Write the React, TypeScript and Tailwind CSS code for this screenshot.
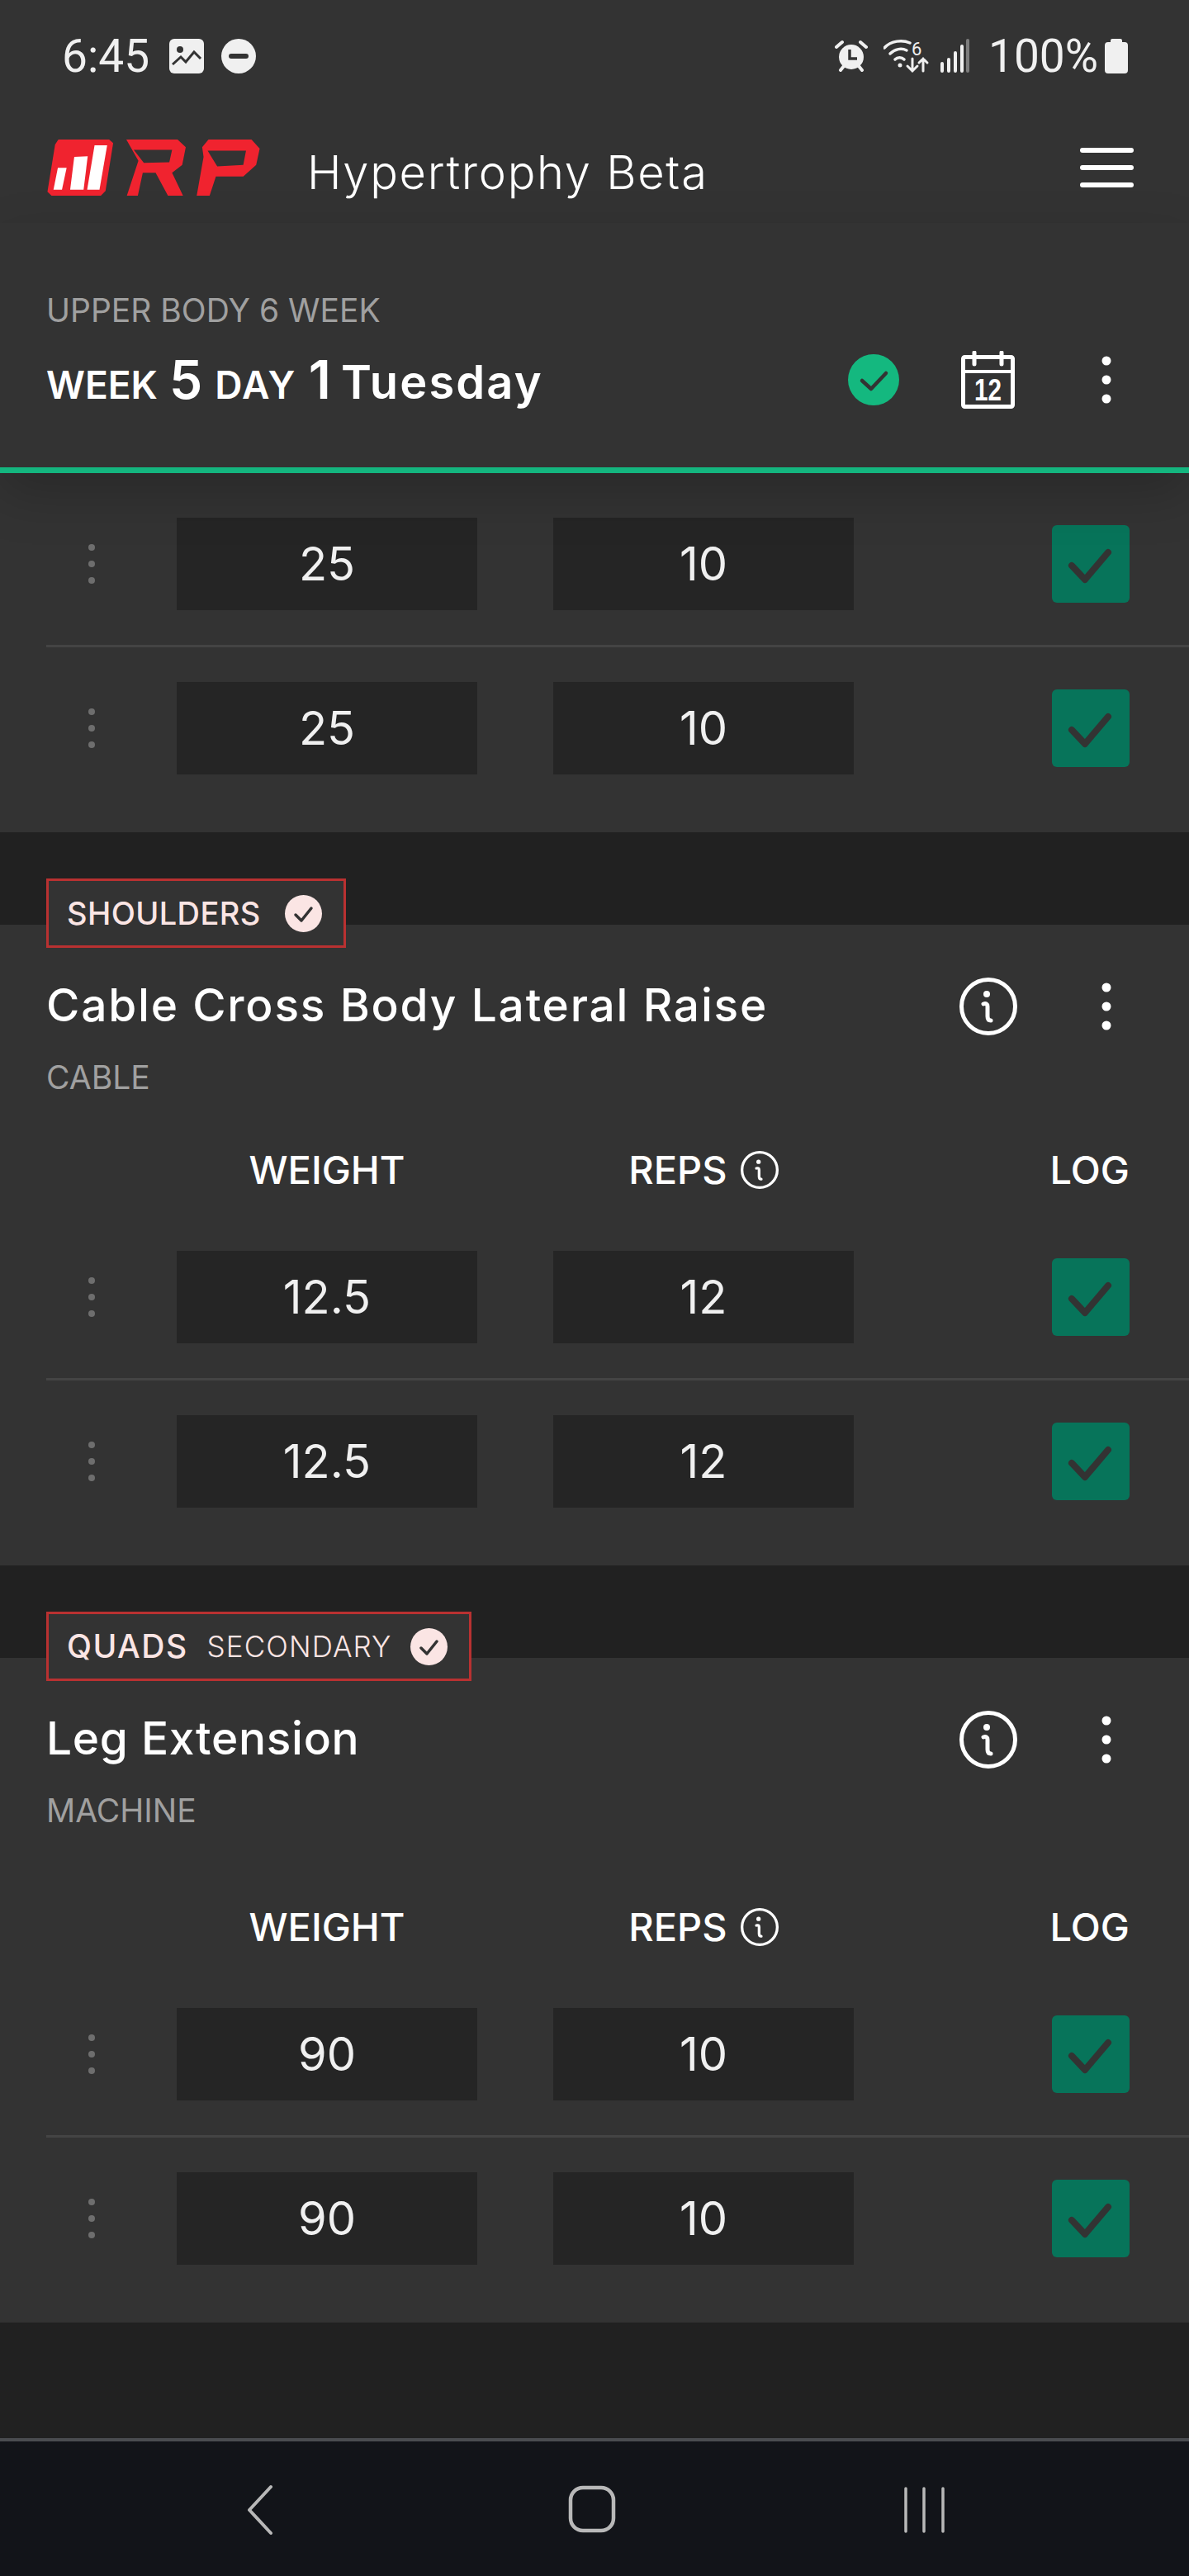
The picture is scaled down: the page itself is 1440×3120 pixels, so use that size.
interface SetRow {
  weight: string;
  reps: string;
}

function Dots({ className }: { className: string }) {
  return (
    <svg viewBox="0 0 12 58" className={className} fill="currentColor">
      <circle cx="6" cy="6" r="5.5" />
      <circle cx="6" cy="29" r="5.5" />
      <circle cx="6" cy="52" r="5.5" />
    </svg>
  );
}

function InfoIcon({ className }: { className: string }) {
  return (
    <svg viewBox="0 0 70 70" className={className} fill="none" stroke="currentColor">
      <circle cx="35" cy="35" r="32.5" strokeWidth="5" />
      <circle cx="33" cy="20" r="4" fill="currentColor" stroke="none" />
      <path d="M29 32c3-1 5 0 5 3v12c0 3 1 5 4 5" strokeWidth="5" strokeLinecap="round" />
    </svg>
  );
}

function Logo() {
  return (
    <svg viewBox="80 57 775 205" className="w-[258px] h-[68px]">
      <polygon fill="#f0232f" points="120,57 305,57 320,70 292,245 275,262 95,262 80,248 108,75" />
      <polygon fill="#fff" points="118,160 150,160 133,240 102,240" />
      <polygon fill="#fff" points="178,120 227,118 212,240 163,240" />
      <polygon fill="#fff" points="252,78 298,78 270,240 225,240" />
      <path
        fill="#f0232f"
        fillRule="evenodd"
        d="M368 57H555L585 85L572 150L535 178L575 262H520L475 178H428L410 262H370L412 135ZM395 95L432 142L525 140L535 95Z"
      />
      <path
        fill="#f0232f"
        fillRule="evenodd"
        d="M668 57H825L855 90L842 150L795 192H695L672 262H625L650 120L645 85ZM665 98L700 155L795 150L805 98Z"
      />
    </svg>
  );
}

function StatusBar() {
  return (
    <div className="flex items-center h-[136px] pl-[75px] pr-[74px] text-[#f0f0f0] font-['Roboto',sans-serif]">
      <span className="text-[55px] leading-none">6:45</span>
      <svg viewBox="0 0 42 42" className="w-[42px] h-[42px] ml-[24px]">
        <rect width="42" height="42" rx="6" fill="#f0f0f0" />
        <circle cx="13" cy="13" r="4" fill="#333" />
        <path d="M4 31l10-9 6 6 10-12 8 8" fill="none" stroke="#333" strokeWidth="3" />
      </svg>
      <svg viewBox="0 0 42 42" className="w-[42px] h-[42px] ml-[21px]">
        <circle cx="21" cy="21" r="21" fill="#f0f0f0" />
        <rect x="9" y="18" width="24" height="6" rx="3" fill="#333" />
      </svg>
      <div className="flex-1" />
      <svg viewBox="0 0 40 40" className="w-[40px] h-[40px]">
        <path d="M2 9l7-6M38 9l-7-6" stroke="#f0f0f0" strokeWidth="4" strokeLinecap="round" />
        <path d="M7 37l4-5M33 37l-4-5" stroke="#f0f0f0" strokeWidth="4" strokeLinecap="round" />
        <circle cx="20" cy="21" r="15" fill="#f0f0f0" />
        <path d="M18 12v11h9" fill="none" stroke="#333" strokeWidth="3.5" />
      </svg>
      <svg viewBox="0 0 56 42" className="w-[56px] h-[42px] ml-[19px]">
        <g fill="none" stroke="#f0f0f0" strokeWidth="3.5" strokeLinecap="round">
          <path d="M1 11C9 2 23 1 32 5" />
          <path d="M8 18C14 12 22 11 28 14" />
          <path d="M14 25c3-3 8-3 11 0" />
          <path d="M35 24v15m-6-6l6 6 6-6" strokeWidth="3" />
          <path d="M48 39V24m-5 5l5-5 5 5" strokeWidth="3" />
        </g>
        <circle cx="20" cy="32" r="2.5" fill="#f0f0f0" />
        <text x="34" y="20" fill="#f0f0f0" fontSize="22" fontFamily="Roboto, sans-serif">6</text>
      </svg>
      <svg viewBox="0 0 36 42" className="w-[36px] h-[42px] ml-[13px]">
        <g stroke="#f0f0f0" strokeWidth="4" strokeLinecap="round">
          <path d="M2 30v9M10 25v14M18 17v22M26 9v30" />
        </g>
        <path d="M33 2v37" stroke="#7d7d7d" strokeWidth="4" strokeLinecap="round" />
      </svg>
      <span className="text-[55px] leading-none ml-[22px]">100%</span>
      <svg viewBox="0 0 28 42" className="w-[28px] h-[42px] ml-[8px]">
        <path d="M9 0h10a2 2 0 0 1 2 2v2h3a4 4 0 0 1 4 4v30a4 4 0 0 1-4 4H4a4 4 0 0 1-4-4V8a4 4 0 0 1 4-4h3V2a2 2 0 0 1 2-2z" fill="#f0f0f0" />
      </svg>
    </div>
  );
}

function AppBar() {
  return (
    <div className="flex items-center h-[134px] pl-[57px] pr-[67px]">
      <Logo />
      <span className="ml-[57px] mt-[12px] text-[56px] tracking-[1.7px] leading-none font-light text-white">Hypertrophy Beta</span>
      <div className="flex-1" />
      <div className="flex flex-col gap-[15px] w-[65px]">
        <div className="h-[6px] rounded-full bg-white" />
        <div className="h-[6px] rounded-full bg-white" />
        <div className="h-[6px] rounded-full bg-white" />
      </div>
    </div>
  );
}

function ProgramHeader() {
  return (
    <div className="relative z-10 border-b-[7px] border-[#14b67f] pl-[56px] pr-[94px] pt-[86px] pb-[66px] bg-[#333333] shadow-[0_24px_60px_rgba(0,0,0,0.2)]">
      <div className="h-[40px] flex items-center text-[39px] text-[#a0a0a0]">UPPER BODY 6 WEEK</div>
      <div className="mt-[24px] h-[80px] flex items-center">
        <div className="flex items-baseline font-semibold text-white">
          <span className="text-[46px]">WEEK</span>
          <span className="text-[64px] ml-[14px]">5</span>
          <span className="text-[46px] tracking-[1.5px] ml-[15px]">DAY</span>
          <span className="text-[64px] ml-[15px]">1</span>
          <span className="text-[56px] tracking-[2.1px] ml-[12px]">Tuesday</span>
        </div>
        <div className="flex-1" />
        <div className="w-[62px] h-[62px] rounded-full bg-[#14b87f]">
          <svg viewBox="0 0 62 62" className="w-[62px] h-[62px]" fill="none" stroke="#333333" strokeWidth="4.5" strokeLinecap="round" strokeLinejoin="round">
            <path d="M17 32l11 10 18-19" />
          </svg>
        </div>
        <svg viewBox="0 0 65 70" className="w-[65px] h-[70px] ml-[75px]" fill="none" stroke="#fff" strokeWidth="5">
          <rect x="2.5" y="7.5" width="60" height="60" rx="2" />
          <path d="M2.5 25h60" strokeWidth="4" />
          <path d="M16 2v14M49 2v14" strokeLinecap="round" />
          <text x="32.5" y="60" textAnchor="middle" fill="#fff" stroke="none" fontSize="36" fontWeight="700" fontFamily="Liberation Sans, sans-serif" textLength="33" lengthAdjust="spacingAndGlyphs">12</text>
        </svg>
        <Dots className="w-[12px] h-[58px] ml-[105px] text-white" />
      </div>
    </div>
  );
}

function LogRow({ row, last }: { row: SetRow; last?: boolean }) {
  return (
    <div className={last ? 'ml-[56px] flex items-center h-[196px]' : 'ml-[56px] flex items-center h-[199px] border-b-[3px] border-[#444444]'}>
      <div className="w-[158px] pl-[51px]">
        <svg viewBox="0 0 8 48" className="w-[8px] h-[48px] text-[#6e6e6e]" fill="currentColor">
          <circle cx="4" cy="4" r="4" />
          <circle cx="4" cy="24" r="4" />
          <circle cx="4" cy="44" r="4" />
        </svg>
      </div>
      <div className="w-[364px] h-[112px] bg-[#252525] flex items-center justify-center text-[56px] text-[#f0f0f0]">{row.weight}</div>
      <div className="w-[364px] h-[112px] ml-[92px] bg-[#252525] flex items-center justify-center text-[56px] text-[#f0f0f0]">{row.reps}</div>
      <div className="w-[94px] h-[94px] ml-[240px] rounded-[6px] bg-[#07745a]">
        <svg viewBox="0 0 94 94" className="w-[94px] h-[94px]" fill="none" stroke="#333333" strokeWidth="8" strokeLinecap="round" strokeLinejoin="round">
          <path d="M24 49l16 17 28-33" />
        </svg>
      </div>
    </div>
  );
}

function BadgeCheck() {
  return (
    <div className="w-[45px] h-[45px] rounded-full bg-[#fbe5e4]">
      <svg viewBox="0 0 45 45" className="w-[45px] h-[45px]" fill="none" stroke="#333333" strokeWidth="3.5" strokeLinecap="round" strokeLinejoin="round">
        <path d="M13 24l7 7 12-15" />
      </svg>
    </div>
  );
}

function ExerciseCard({
  muscle,
  secondary,
  title,
  titleClass,
  equipment,
  headerGap,
  rows,
}: {
  muscle: string;
  secondary?: string;
  title: string;
  titleClass: string;
  equipment: string;
  headerGap: string;
  rows: SetRow[];
}) {
  return (
    <div className="flow-root bg-[#333333] pb-[28px]">
      <div className="flex ml-[56px] -mt-[56px]">
        <div className="flex items-center h-[84px] border-[3px] border-[#b93131] bg-[#333333] pl-[22px] pr-[26px] text-[#fbe5e4]">
          <span className={secondary ? 'text-[39px] tracking-[1.5px] font-medium' : 'text-[38px] tracking-[0.4px] font-medium'}>{muscle}</span>
          {secondary && <span className="text-[35px] tracking-[1.1px] font-light ml-[23px]">{secondary}</span>}
          <div className={secondary ? 'ml-[23px]' : 'ml-[29px]'}>
            <BadgeCheck />
          </div>
        </div>
      </div>
      <div className="mt-[36px] h-[70px] flex items-center pl-[56px] pr-[94px]">
        <span className={`${titleClass} pb-[3px] text-[55px] font-medium text-white`}>{title}</span>
        <div className="flex-1" />
        <InfoIcon className="w-[70px] h-[70px] text-white" />
        <Dots className="w-[12px] h-[58px] ml-[102px] text-white" />
      </div>
      <div className="mt-[31px] h-[40px] flex items-center pl-[56px] text-[39px] text-[#a0a0a0]">{equipment}</div>
      <div className={`${headerGap} h-[40px] flex items-center text-[47px] font-medium text-white`}>
        <div className="w-[214px]" />
        <div className="w-[364px] text-center">WEIGHT</div>
        <div className="w-[364px] ml-[92px] flex items-center justify-center gap-[16px]">
          <span>REPS</span>
          <InfoIcon className="w-[46px] h-[46px] text-white" />
        </div>
        <div className="w-[94px] ml-[240px] flex justify-end">LOG</div>
      </div>
      <div className="mt-[36px]">
        {rows.map((row, i) => (
          <LogRow key={i} row={row} last={i === rows.length - 1} />
        ))}
      </div>
    </div>
  );
}

function NavBar() {
  return (
    <div className="h-[168px] border-t-[4px] border-[#4a4c50] bg-[#121419]">
      <svg viewBox="0 0 1440 164" className="w-[1440px] h-[164px]" fill="none" stroke="#b8b8b8">
        <path d="M328 55L302 83L328 111" strokeWidth="4" strokeLinecap="round" strokeLinejoin="round" />
        <rect x="691" y="56" width="52" height="52" rx="15" strokeWidth="4.5" />
        <path d="M1097 57v52M1119 57v52M1142 57v52" strokeWidth="3.5" strokeLinecap="round" />
      </svg>
    </div>
  );
}

const shoulders: SetRow[] = [
  { weight: '12.5', reps: '12' },
  { weight: '12.5', reps: '12' },
];

const quads: SetRow[] = [
  { weight: '90', reps: '10' },
  { weight: '90', reps: '10' },
];

export default function App() {
  return (
    <div className="w-[1440px] h-[3120px] overflow-hidden bg-[#212121] font-['Inter',sans-serif]">
      <div className="bg-[#333333]">
        <StatusBar />
        <AppBar />
      </div>
      <ProgramHeader />
      <div className="bg-[#333333] pt-[12px] pb-[28px]">
        <LogRow row={{ weight: '25', reps: '10' }} />
        <LogRow row={{ weight: '25', reps: '10' }} last />
      </div>
      <div className="h-[112px]" />
      <ExerciseCard muscle="SHOULDERS" title="Cable Cross Body Lateral Raise" titleClass="tracking-[1.8px]" equipment="CABLE" headerGap="mt-[72px]" rows={shoulders} />
      <div className="h-[112px]" />
      <ExerciseCard muscle="QUADS" secondary="SECONDARY" title="Leg Extension" titleClass="tracking-[0.7px]" equipment="MACHINE" headerGap="mt-[101px]" rows={quads} />
      <div className="h-[140px]" />
      <NavBar />
    </div>
  );
}
